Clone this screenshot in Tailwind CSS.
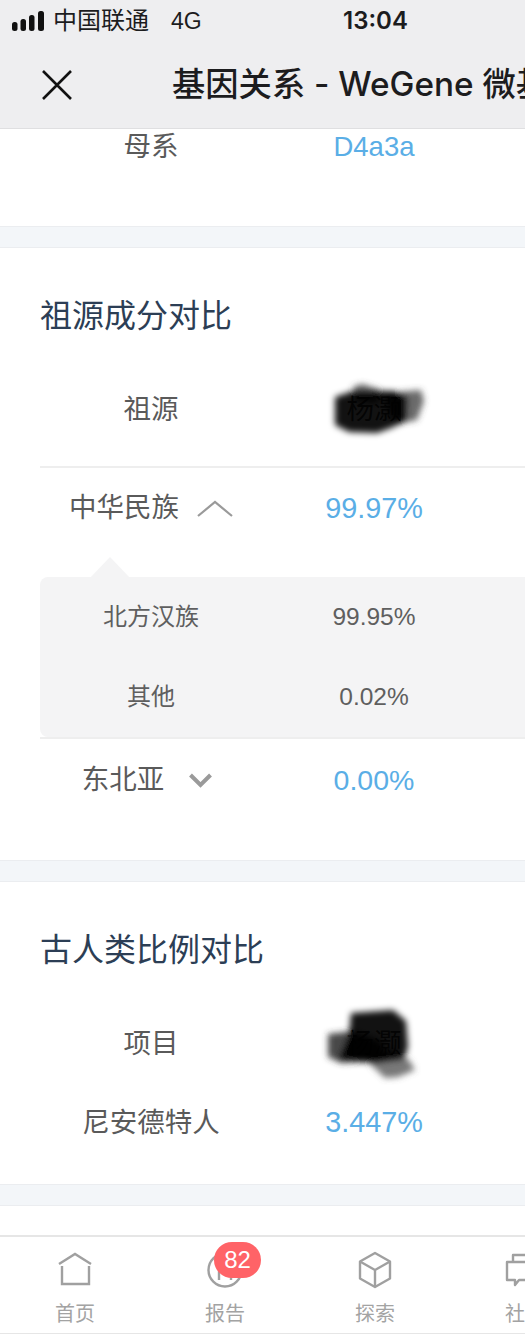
<!DOCTYPE html>
<html lang="zh-CN">
<head>
  <meta charset="UTF-8" />
  <meta name="viewport" content="width=device-width, initial-scale=1.0" />
  <title>基因关系 - WeGene 微基因</title>
  <script src="https://cdn.jsdelivr.net/npm/@tailwindcss/browser@4"></script>
</head>
<body class="bg-white">
  <div class="w-[525px] h-[1334px] overflow-hidden flex flex-col font-['Liberation_Sans','Noto_Sans_CJK_SC',sans-serif]">
    <!-- Status bar + nav -->
    <header class="h-[129px] shrink-0 bg-[#eeeef0] border-b border-[#dfdfe1] text-[#1c1c1e]">
      <div class="relative h-[42px] flex items-center pl-[12px] text-[24px]">
        <svg width="32" height="20" viewBox="0 0 32 20" fill="#111">
          <rect x="0" y="11" width="5.5" height="9" rx="2.5" />
          <rect x="8.5" y="8" width="5.5" height="12" rx="2.5" />
          <rect x="17" y="4" width="5.5" height="16" rx="2.5" />
          <rect x="26" y="0" width="6" height="20" rx="2.5" />
        </svg>
        <span class="ml-[9px] leading-none">中国联通</span>
        <span class="ml-[22px] text-[23px] leading-none">4G</span>
        <span class="absolute left-[343px] top-[9px] text-[24px] leading-[24px] font-semibold font-['Inter',sans-serif]">13:04</span>
      </div>
      <div class="h-[86px] flex items-center pl-[42px] whitespace-nowrap">
        <svg width="30" height="30" viewBox="0 0 30 30" class="shrink-0" fill="none" stroke="#111" stroke-width="2.6">
          <path d="M1 1 L29 29 M29 1 L1 29" />
        </svg>
        <span class="ml-[100px] text-[33.3px] leading-none font-medium font-['Inter','Noto_Sans_CJK_SC',sans-serif]">基因关系 - WeGene 微基因</span>
      </div>
    </header>

    <main class="flex-1 overflow-hidden">
      <!-- Haplogroup remainder -->
      <section class="h-[97px] pl-[40px]">
        <div class="grid grid-cols-[222px_224px] h-[36px] items-center text-[27.5px] leading-none">
          <span class="text-center text-[#5a5a5a]">母系</span>
          <span class="text-center text-[#5aaee6] text-[27.5px]">D4a3a</span>
        </div>
      </section>
      <div class="h-[22px] bg-[#f3f6f9] border-y border-[#ebedf0]"></div>

      <!-- Ancestry -->
      <section class="h-[612px] pl-[40px]">
        <h2 class="h-[124px] pt-[50px] text-[32px] leading-[36px] text-[#2c3e55]">祖源成分对比</h2>
        <div class="grid grid-cols-[222px_224px] h-[96px] pb-[18px] items-center text-[27.5px] leading-none text-[#5a5a5a] border-b-2 border-[#eeeeee]">
          <span class="text-center">祖源</span>
          <span class="text-center">
            <span class="relative inline-block text-[#333]">杨灏
              <svg width="108" height="68" viewBox="324 375 108 68" class="absolute left-[-22px] top-1/2 -translate-y-1/2">
                <defs><filter id="b1" x="-20%" y="-20%" width="140%" height="140%"><feGaussianBlur stdDeviation="3" /></filter></defs>
                <g filter="url(#b1)">
                  <path d="M383 392 L420 389 L423 400 L416 419 L396 423 L388 412 Z" fill="#444" fill-opacity="0.8" />
                  <path d="M352 386 L361 383 L380 389 L376 402 L354 400 Z" fill="#444" fill-opacity="0.85" />
                  <path d="M334 396 L352 390 L392 390 L406 396 L405 420 L390 427 L376 432 L348 431 L334 424 Z" fill="#000" fill-opacity="0.93" />
                </g>
              </svg>
            </span>
          </span>
        </div>

        <div class="grid grid-cols-[222px_224px] h-[80px] items-center text-[27.5px] leading-none text-[#5a5a5a]">
          <span class="flex items-center justify-center gap-[18px]">
            <span>中华民族</span>
            <svg width="36" height="17" viewBox="0 0 36 17" fill="none" stroke="#9a9a9a" stroke-width="2.2"><path d="M1 16 L18 2 L35 16" /></svg>
          </span>
          <span class="text-center text-[#5aaee6] text-[28.8px]">99.97%</span>
        </div>

        <!-- Expanded panel -->
        <div class="relative mt-[29px] h-[160px] bg-[#f4f4f5] rounded-l-[8px] text-[24px] leading-none text-[#5f5f5f]">
          <svg width="40" height="21" viewBox="0 0 40 21" class="absolute left-[50px] top-[-20px]" fill="#f4f4f5"><path d="M0 21 L20 0 L40 21 Z" /></svg>
          <div class="grid grid-cols-[222px_224px] h-[80px] items-center">
            <span class="text-center">北方汉族</span>
            <span class="text-center text-[24.5px]">99.95%</span>
          </div>
          <div class="grid grid-cols-[222px_224px] h-[80px] items-center">
            <span class="text-center">其他</span>
            <span class="text-center text-[24.5px]">0.02%</span>
          </div>
        </div>
        <div class="h-[2px] bg-[#eeeeee]"></div>

        <div class="grid grid-cols-[222px_224px] h-[82px] items-center text-[27.5px] leading-none text-[#5a5a5a]">
          <span class="flex items-center justify-center gap-[25px] pr-[8px]">
            <span>东北亚</span>
            <svg width="23" height="15" viewBox="0 0 23 15" fill="none" stroke="#9a9a9a" stroke-width="4"><path d="M1.5 2 L11.5 12 L21.5 2" /></svg>
          </span>
          <span class="text-center text-[#5aaee6] text-[28.5px]">0.00%</span>
        </div>
      </section>
      <div class="h-[22px] bg-[#f3f6f9] border-y border-[#ebedf0]"></div>

      <!-- Archaic human -->
      <section class="h-[302px] pl-[40px]">
        <h2 class="h-[118px] pt-[50px] text-[32px] leading-[36px] text-[#2c3e55]">古人类比例对比</h2>
        <div class="grid grid-cols-[222px_224px] h-[88px] items-center text-[27.5px] leading-none text-[#5a5a5a]">
          <span class="text-center">项目</span>
          <span class="text-center">
            <span class="relative inline-block text-[#333]">杨灏
              <svg width="106" height="86" viewBox="318 1000 106 86" class="absolute left-[-28px] top-1/2 -translate-y-1/2">
                <defs><filter id="b2" x="-20%" y="-20%" width="140%" height="140%"><feGaussianBlur stdDeviation="3.2" /></filter></defs>
                <g filter="url(#b2)">
                  <path d="M390 1048 L408 1059 L414 1069 L397 1076 L384 1077 L366 1060 Z" fill="#555" fill-opacity="0.8" />
                  <path d="M327 1033 L352 1030 L380 1040 L386 1060 L340 1062 L327 1056 Z" fill="#333" fill-opacity="0.9" />
                  <path d="M350 1012 L392 1009 L405 1020 L407 1046 L403 1058 L372 1062 L338 1058 L348 1034 Z" fill="#000" fill-opacity="0.93" />
                </g>
              </svg>
            </span>
          </span>
        </div>
        <div class="grid grid-cols-[222px_224px] h-[69px] items-center text-[27.5px] leading-none text-[#5a5a5a]">
          <span class="text-center">尼安德特人</span>
          <span class="text-center text-[#5aaee6] text-[28.8px]">3.447%</span>
        </div>
      </section>
      <div class="h-[22px] bg-[#f3f6f9] border-y border-[#ebedf0]"></div>
    </main>

    <!-- Tab bar -->
    <nav class="h-[99px] shrink-0 bg-white border-t-2 border-b border-[#e6e6e6] flex text-[20px] leading-none text-[#a3a3a3] whitespace-nowrap">
      <div class="w-[150px] shrink-0 flex flex-col items-center">
        <svg width="36" height="36" viewBox="0 0 36 36" class="mt-[15px]" fill="none" stroke="#a0a0a0" stroke-width="2.4">
          <path d="M2 12 L18 2 L34 12" />
          <path d="M5 14 V32 H32 V14" />
        </svg>
        <span class="mt-[16px]">首页</span>
      </div>
      <div class="w-[150px] shrink-0 flex flex-col items-center relative">
        <svg width="36" height="36" viewBox="0 0 36 36" class="mt-[15px]" fill="none" stroke="#a0a0a0" stroke-width="2.4">
          <circle cx="18" cy="18" r="16.5" />
          <path d="M12 28 V20 L18 16 L24 20 V28" />
        </svg>
        <span class="mt-[16px]">报告</span>
        <span class="absolute left-[64px] top-[5px] w-[47px] h-[36px] rounded-full bg-[#ff6367] text-white text-[24px] flex items-center justify-center">82</span>
      </div>
      <div class="w-[150px] shrink-0 flex flex-col items-center">
        <svg width="36" height="38" viewBox="0 0 36 38" class="mt-[14px]" fill="none" stroke="#a0a0a0" stroke-width="2.4" stroke-linejoin="round">
          <path d="M18 2 L33 10.5 V27.5 L18 36 L3 27.5 V10.5 Z" />
          <path d="M3 10.5 L18 19 L33 10.5 M18 19 V36" />
        </svg>
        <span class="mt-[15px]">探索</span>
      </div>
      <div class="w-[150px] shrink-0 flex flex-col items-center">
        <svg width="40" height="36" viewBox="0 0 40 36" class="mt-[15px]" fill="none" stroke="#a0a0a0" stroke-width="2.4" stroke-linejoin="round">
          <path d="M2 10 H30 V28 H14 L10 33 V28 H2 Z" />
          <path d="M8 10 V3 H38 V22 H30" />
        </svg>
        <span class="mt-[16px]">社区</span>
      </div>
    </nav>
  </div>
</body>
</html>
